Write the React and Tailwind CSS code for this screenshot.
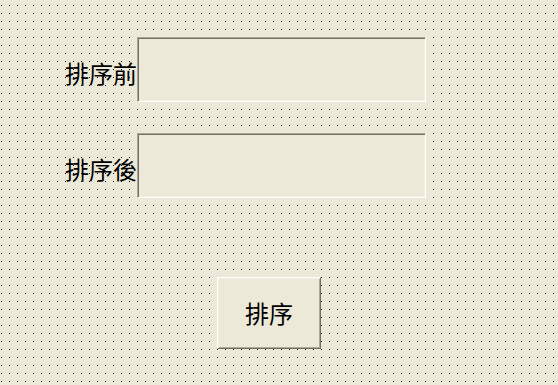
import React from 'react'

const field =
  'block w-[289px] h-[65px] bg-[#ece9d8] border border-t-[#aca899] border-l-[#aca899] border-r-white border-b-white shadow-[inset_1px_1px_0_#716f64,inset_-1px_-1px_0_#f1efe2] outline-none'

function Row({ label, className }) {
  return (
    <div className={`flex items-center ${className}`}>
      <span className="w-[137px] pt-[7px] text-right text-[24px] leading-none text-black">{label}</span>
      <input type="text" readOnly className={field} />
    </div>
  )
}

export default function App() {
  return (
    <div
      className="w-[558px] h-[385px] overflow-hidden bg-[#ece9d8] bg-[linear-gradient(to_bottom,transparent_1px,#ece9d8_1px),linear-gradient(to_right,#000_1px,#ece9d8_1px)] bg-size-[8px_8px] bg-position-[1px_5px] pt-[37px]"
      style={{ fontFamily: '"Noto Sans CJK TC", "Noto Sans CJK JP", sans-serif' }}
    >
      <Row label="排序前" />
      <Row label="排序後" className="mt-[31px]" />
      <button
        type="button"
        className="ml-[217px] mt-[79px] flex w-[104px] h-[72px] items-center justify-center bg-[#ece9d8] border border-t-white border-l-white border-r-[#716f64] border-b-[#716f64] shadow-[inset_1px_1px_0_#f1efe2,inset_-1px_-1px_0_#aca899] text-[24px] leading-none text-black"
      >
        排序
      </button>
    </div>
  )
}
